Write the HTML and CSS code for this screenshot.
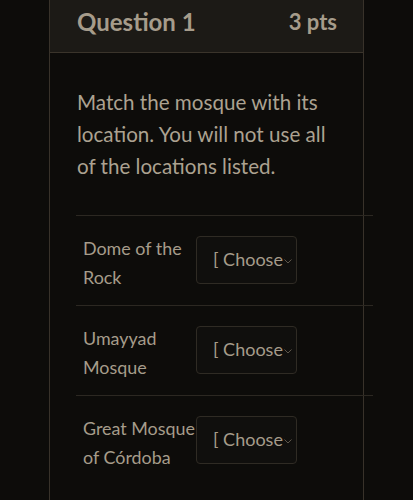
FILE: index.html
```html
<!DOCTYPE html>
<html lang="en">
<head>
  <meta charset="UTF-8">
  <meta name="viewport" content="width=device-width, initial-scale=1.0">
  <title>Question 1</title>
  <link rel="stylesheet" href="styles.css">
</head>
<body>
  <div class="card">
    <div class="card-header">
      <span class="title">Question 1</span>
      <span class="points">3 pts</span>
    </div>

    <div class="card-body">
      <p class="prompt">Match the mosque with its location. You will not use all of the locations listed.</p>

      <div class="matches">
        <div class="match-row">
          <div class="match-label">Dome of the Rock</div>
          <div class="select">
            <span class="select-text">[ Choose</span>
            <svg class="chevron" width="8" height="5" viewBox="0 0 8 5"><path d="M0.5 0.5 L4 4 L7.5 0.5" fill="none" stroke="#5e564a" stroke-width="1"/></svg>
          </div>
        </div>
        <div class="match-row">
          <div class="match-label">Umayyad Mosque</div>
          <div class="select">
            <span class="select-text">[ Choose</span>
            <svg class="chevron" width="8" height="5" viewBox="0 0 8 5"><path d="M0.5 0.5 L4 4 L7.5 0.5" fill="none" stroke="#5e564a" stroke-width="1"/></svg>
          </div>
        </div>
        <div class="match-row">
          <div class="match-label">Great Mosque of Córdoba</div>
          <div class="select">
            <span class="select-text">[ Choose</span>
            <svg class="chevron" width="8" height="5" viewBox="0 0 8 5"><path d="M0.5 0.5 L4 4 L7.5 0.5" fill="none" stroke="#5e564a" stroke-width="1"/></svg>
          </div>
        </div>
      </div>
    </div>
  </div>
</body>
</html>
```

FILE: styles.css
```css
body {
  margin: 0;
  background: #0d0c0a;
  font-family: Lato, 'Open Sans', sans-serif;
  color: #a69c8b;
}
.card {
  margin-left: 49px;
  width: 313px;
  min-height: 500px;
  border-left: 1px solid #38322a;
  border-right: 1px solid #38322a;
}
.card-header {
  height: 53px;
  box-sizing: border-box;
  padding: 0 26px 10px 27px;
  background: #1c1a16;
  border-bottom: 1px solid #3a342b;
  display: flex;
  justify-content: space-between;
  align-items: center;
  font-weight: bold;
}
.title {
  font-size: 24px;
}
.points {
  font-size: 22px;
}
.card-body {
  padding: 33px 0 0 27px;
}
.prompt {
  margin: 0;
  width: 262px;
  font-size: 20.6px;
  line-height: 32px;
  color: #aca291;
}
.matches {
  margin-top: 33px;
  margin-left: -1px;
  width: 297px;
}
.match-row {
  display: flex;
  align-items: flex-start;
  padding: 18px 0 13px 7px;
  border-top: 1px solid #2c2822;
}
.match-label {
  width: 113px;
  flex-shrink: 0;
  font-size: 17.9px;
  line-height: 29px;
}
.select {
  width: 101px;
  height: 48px;
  margin-top: 2px;
  box-sizing: border-box;
  border: 1px solid #2f2b24;
  border-radius: 4px;
  background: #100f0d;
  display: flex;
  align-items: center;
  padding: 0 0 3px 16px;
}
.select-text {
  white-space: nowrap;
  font-size: 18px;
}
.chevron {
  margin-left: 1px;
  margin-top: 5px;
  flex-shrink: 0;
}
```
